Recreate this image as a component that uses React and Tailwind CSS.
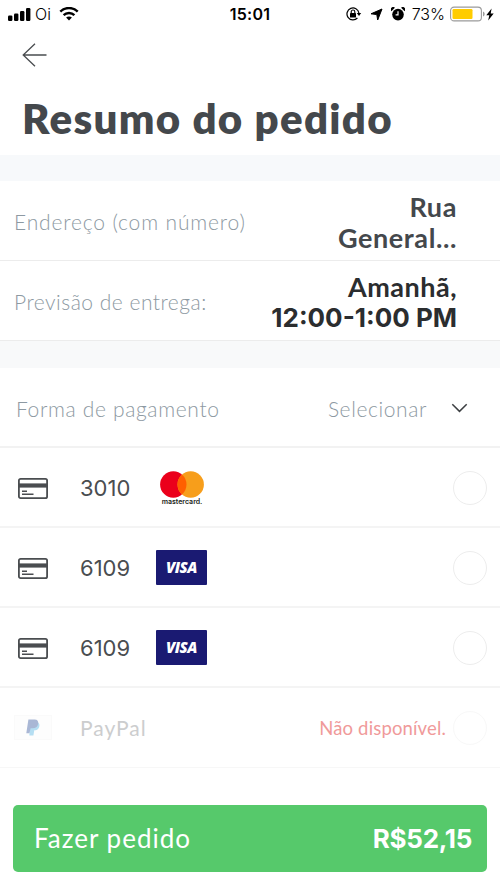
/**
 * App.jsx — Order summary screen (mobile checkout)
 */

const CARDS = [
  { id: 1, digits: '3010', brand: 'mastercard' },
  { id: 2, digits: '6109', brand: 'visa' },
  { id: 3, digits: '6109', brand: 'visa' },
]

function StatusBar() {
  return (
    <div className="h-7 grid grid-cols-[1fr_auto_1fr] items-center text-black font-[Inter,sans-serif]">
      <div className="flex items-center pl-2">
        <svg width="23" height="13" viewBox="0 0 23 13" fill="currentColor">
          <rect x="0" y="7.5" width="4.4" height="5.5" rx="1.2" />
          <rect x="6" y="5.5" width="4.4" height="7.5" rx="1.2" />
          <rect x="12" y="3" width="4.4" height="10" rx="1.2" />
          <rect x="18" y="0" width="4.4" height="13" rx="1.2" />
        </svg>
        <span className="ml-1 text-base font-light">Oi</span>
        <svg className="ml-2" width="20" height="14" viewBox="0 0 20 14" fill="none" stroke="currentColor">
          <path d="M1.3 4.6C6.2-.1 13.8-.1 18.7 4.6" strokeWidth="2.5" />
          <path d="M4.6 8.1c3-2.9 7.8-2.9 10.8 0" strokeWidth="2.4" />
          <path d="M10 13.5l-2.9-2.9c1.6-1.5 4.2-1.5 5.8 0z" fill="currentColor" stroke="none" />
        </svg>
      </div>
      <span className="text-base font-semibold tracking-[0.3px]">15:01</span>
      <div className="flex items-center justify-end pr-1.5">
        <svg width="16" height="14" viewBox="0 0 16 14" fill="none" stroke="currentColor">
          <path d="M12.9 6A6 6 0 1 0 11.4 11" strokeWidth="1.2" />
          <path d="M10.8 6h4.4L13 9z" fill="currentColor" stroke="none" />
          <rect x="4" y="6" width="6" height="4.5" rx=".6" fill="currentColor" stroke="none" />
          <path d="M5.2 6V4.8a1.8 1.8 0 0 1 3.6 0V6" strokeWidth="1.1" />
        </svg>
        <svg className="ml-2" width="13" height="13" viewBox="0 0 13 13" fill="currentColor" stroke="currentColor" strokeWidth="1" strokeLinejoin="round">
          <path d="M12 1L7.7 12 6.8 6.6 1 5.8z" />
        </svg>
        <svg className="ml-2" width="14" height="14" viewBox="0 0 14 14" fill="currentColor">
          <circle cx="7" cy="7.6" r="5.8" />
          <path d="M.4 4.2A2.2 2.2 0 0 1 3.9.8zM13.6 4.2A2.2 2.2 0 0 0 10.1.8z" />
          <path d="M7 4.2v3.7H4.6" fill="none" stroke="#fff" strokeWidth="1.2" />
        </svg>
        <span className="ml-[7px] mr-px text-base font-light">73%</span>
        <svg className="ml-1" width="36" height="16" viewBox="0 0 36 16">
          <rect x=".6" y="1.1" width="30.8" height="13.8" rx="3.5" fill="#fff" stroke="#9b9b9b" strokeWidth="1.1" />
          <rect x="2.5" y="3" width="20" height="10" rx="1.2" fill="#fc0" />
          <path d="M33 5.5c2.2.8 2.2 4.2 0 5z" fill="#9b9b9b" />
        </svg>
        <svg width="8" height="13" viewBox="0 0 8 13" fill="currentColor">
          <path d="M5.6.5L.3 7.2h3L2.2 12.5 7.700 5.500h-3z" />
        </svg>
      </div>
    </div>
  )
}

function CardIcon() {
  return (
    <svg className="mt-0.5" width="30" height="21" viewBox="0 0 30 21" fill="none" stroke="#4a4d50">
      <rect x=".9" y=".9" width="28.2" height="19.2" rx="1.7" strokeWidth="1.8" />
      <path d="M1 7.5h28" strokeWidth="4.2" />
      <path d="M4 13.2h5M4 16.3h11.5" strokeWidth="1.4" />
    </svg>
  )
}

function Mastercard() {
  return (
    <div className="mt-0.5 ml-[4px] w-[44px] flex flex-col items-center">
      <svg width="44" height="27" viewBox="0 0 44 27">
        <circle cx="13.3" cy="13.5" r="13.2" fill="#eb001b" />
        <circle cx="30.7" cy="13.5" r="13.2" fill="#f79e1b" />
        <path d="M22 3.58a13.2 13.2 0 0 1 0 19.84a13.2 13.2 0 0 1 0-19.84z" fill="#ff5f00" />
      </svg>
      <span className="text-[7px] leading-[8px] font-semibold text-[#231f20] font-[Inter,sans-serif]">mastercard.</span>
    </div>
  )
}

function Visa() {
  return (
    <div className="mt-px w-[51px] h-[35px] rounded-[1px] bg-[#1a1a72] flex items-center justify-center">
      <span className="text-white text-[15px] leading-none font-extrabold italic tracking-[-0.5px] font-['Open_Sans',sans-serif]">
        VISA
      </span>
    </div>
  )
}

function PayPalIcon() {
  return (
    <div className="w-[38px] h-[25px] border border-[#fafafa] bg-[#fdfdfd] flex items-center justify-center">
      <svg width="14" height="17" viewBox="0 0 14 17">
        <path d="M4.5 3h6.8c2.3 1 2.6 3.3 1.7 5.5-.8 2-2.5 2.8-4.7 2.8l-.9 5.2H3.3z" fill="#b5def2" />
        <path d="M2.4.4h6.2c2.900 0 4.100 1.900 3.500 4.500-.6 2.900-2.500 4.300-5.400 4.300H4.600L3.500 14.300H.3z" fill="#a9b7d5" />
      </svg>
    </div>
  )
}

function SummaryRow({ label, labelClass, children, valueClass }) {
  return (
    <div className="h-20 border-b border-[#ececec] pl-3.5 pr-[43px] flex items-center justify-between">
      <span className={`mt-0.5 text-[21px] text-[#8d99a2] font-light whitespace-nowrap ${labelClass}`}>{label}</span>
      <div className={`mt-[3px] text-right text-[27px] leading-[31px] whitespace-nowrap ${valueClass}`}>{children}</div>
    </div>
  )
}

function CardRow({ digits, brand }) {
  return (
    <div className="h-20 border-b-2 border-[#f4f4f4] flex items-center pl-[18px] pr-[13px]">
      <CardIcon />
      <span className="mt-0.5 ml-8 w-[76px] text-[22px] text-[#4a4d50] font-[Inter,sans-serif]">{digits}</span>
      {brand === 'visa' ? <Visa /> : <Mastercard />}
      <span className="mt-0.5 ml-auto size-[34px] rounded-full border-[1.5px] border-[#ededed]" />
    </div>
  )
}

export default function App() {
  return (
    <div className="w-[500px] h-[889px] bg-white overflow-hidden font-[Lato,sans-serif]">
      <header className="h-[155px]">
        <StatusBar />
        <div className="h-14 pl-[22px] pt-[15px]">
          <svg width="25" height="24" viewBox="0 0 25 24" fill="none" stroke="#4a4d50" strokeWidth="1.3">
            <path d="M24.5 12H1.2M13 .7L1.2 12 13 23.3" />
          </svg>
        </div>
        <h1 className="pl-[22px] mt-[7px] text-[42px] leading-[54px] font-extrabold text-[#44484c] tracking-[1.3px] whitespace-nowrap">
          Resumo do pedido
        </h1>
      </header>

      <div className="h-[26px] bg-[#f7f9fb]" />

      <SummaryRow
        label="Endereço (com número)"
        labelClass="tracking-[0.85px]"
        valueClass="font-bold text-[#44484c] tracking-[0.6px]"
      >
        <div>Rua</div>
        <div>General...</div>
      </SummaryRow>
      <SummaryRow label="Previsão de entrega:" labelClass="tracking-[0.5px]" valueClass="font-bold text-[#2b2d2f]">
        <div className="tracking-[0.5px]">Amanhã,</div>
        <div className="text-[26px] font-[Inter,sans-serif]">12:00-1:00 PM</div>
      </SummaryRow>

      <div className="h-[27px] bg-[#f8f9fa]" />

      <div className="h-20 border-b-2 border-[#f2f2f2] flex items-center pl-4 pr-8 text-[21px] font-light text-[#8d99a2]">
        <span className="mt-[3px] tracking-[0.65px]">Forma de pagamento</span>
        <span className="mt-[3px] ml-auto tracking-[0.6px]">Selecionar</span>
        <svg className="ml-6 mt-0.5" width="17" height="10" viewBox="0 0 17 10" fill="none" stroke="#3c3f42" strokeWidth="1.5">
          <path d="M1.3 1.2L8.5 8.4 15.7 1.2" />
        </svg>
      </div>

      {CARDS.map(c => (
        <CardRow key={c.id} digits={c.digits} brand={c.brand} />
      ))}

      <div className="h-20 border-b border-[#f7f7f7] flex items-center pl-3.5 pr-[13px]">
        <PayPalIcon />
        <span className="mt-px ml-7 text-[21px] text-[#cccdce] tracking-[1px]">PayPal</span>
        <span className="mt-0.5 ml-auto text-[18.5px] text-[#f09a9a] tracking-[0.15px]">Não disponível.</span>
        <span className="ml-[7px] size-[34px] rounded-full border border-[#f8f8f8]" />
      </div>

      <button className="mt-[37px] ml-[13px] w-[474px] h-[67px] rounded-[5px] bg-[#56c96b] text-white flex items-center justify-between pl-[21px] pr-[15px]">
        <span className="text-[26px] tracking-[1px]">Fazer pedido</span>
        <span className="text-[26px] font-bold tracking-[-0.3px] font-[Inter,sans-serif]">R$52,15</span>
      </button>
    </div>
  )
}
